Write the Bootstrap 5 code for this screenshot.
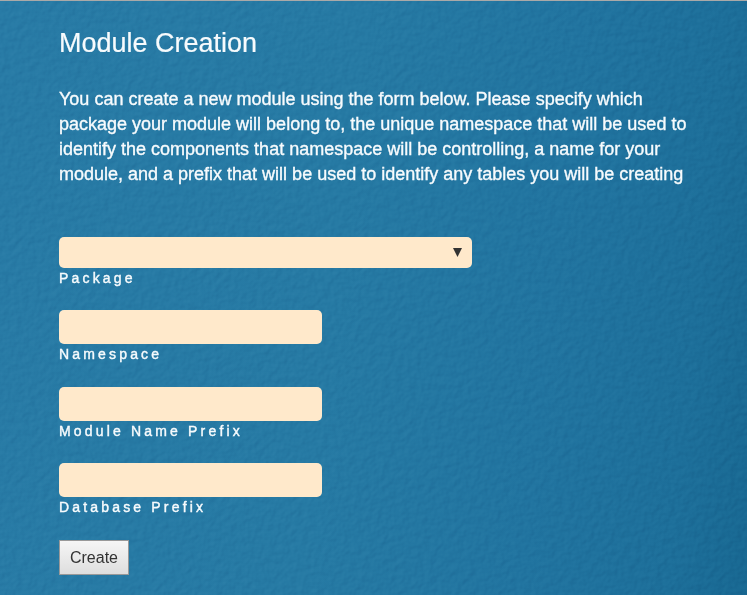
<!DOCTYPE html>
<html lang="en">
<head>
<meta charset="utf-8">
<meta name="viewport" content="width=device-width, initial-scale=1">
<title>Module Creation</title>
<link href="https://cdn.jsdelivr.net/npm/bootstrap@5.3.0/dist/css/bootstrap.min.css" rel="stylesheet">
<style>
body{font-family:"Liberation Sans",Arial,sans-serif;color:#f7fbfd;background:#2378a3;}
.page{height:595px;border-top:1px solid #aaa9a8;background:linear-gradient(96deg,#287ba6 0%,#267aa4 45%,#2174a0 72%,#1d6f9a 90%,#186892 100%);}
.texture{position:absolute;inset:0;width:100%;height:594px;mix-blend-mode:soft-light;}
.content{position:relative;padding:26px 40px 0 59px;}
.title{font-size:27px;line-height:32px;margin-bottom:28px;font-weight:400;-webkit-text-stroke:.2px #f7fbfd;}
.intro{font-size:18px;line-height:25px;margin-bottom:50px;-webkit-text-stroke:.35px #f7fbfd;}
.field{background-color:#ffe9cb;border:0;border-radius:5px;height:34px;width:263px;padding:4px 10px;}
.field:focus{background-color:#ffe9cb;}
.package-field{height:31px;width:413px;background-image:none;}
.arrow{position:absolute;left:394px;top:11px;width:10px;height:9px;pointer-events:none;}
.caption{font-size:14px;line-height:20px;letter-spacing:3.17px;display:block;-webkit-text-stroke:.4px #f7fbfd;}
.group-first{height:73px;}
.group{height:77px;}
.group-mid{height:76px;}
.create{width:70px;height:35px;padding:0;font-size:16px;color:#333;border:1px solid #999;border-radius:0;background:linear-gradient(#f6f6f6,#dedede);}
</style>
<script src="https://cdn.jsdelivr.net/npm/bootstrap@5.3.0/dist/js/bootstrap.bundle.min.js"></script>
</head>
<body class="overflow-hidden">
<main class="page position-relative">
  <svg class="texture" aria-hidden="true">
    <filter id="plaster" x="0" y="0" width="100%" height="100%" color-interpolation-filters="sRGB">
      <feTurbulence type="fractalNoise" baseFrequency="0.15" numOctaves="2" seed="8"/>
      <feDiffuseLighting surfaceScale="1.3" diffuseConstant="0.7" lighting-color="#fff"><feDistantLight azimuth="225" elevation="45"/></feDiffuseLighting>
    </filter>
    <rect width="100%" height="100%" filter="url(#plaster)" opacity=".24"/>
  </svg>
  <div class="content">
    <h1 class="title">Module Creation</h1>
    <p class="intro text-nowrap">You can create a new module using the form below. Please specify which<br>package your module will belong to, the unique namespace that will be used to<br>identify the components that namespace will be controlling, a name for your<br>module, and a prefix that will be used to identify any tables you will be creating</p>
    <form>
      <div class="group-first position-relative">
        <select class="form-select field package-field" id="package"><option></option></select>
        <svg class="arrow" viewBox="0 0 10 9" aria-hidden="true"><path d="M0 0h9L4.5 9z" fill="#333"/></svg>
        <label class="caption" for="package">Package</label>
      </div>
      <div class="group">
        <input class="form-control field" id="namespace" type="text">
        <label class="caption" for="namespace">Namespace</label>
      </div>
      <div class="group-mid">
        <input class="form-control field" id="module" type="text">
        <label class="caption" for="module">Module Name Prefix</label>
      </div>
      <div class="group">
        <input class="form-control field" id="database" type="text">
        <label class="caption" for="database">Database Prefix</label>
      </div>
      <button class="btn create" type="button">Create</button>
    </form>
  </div>
</main>
</body>
</html>
